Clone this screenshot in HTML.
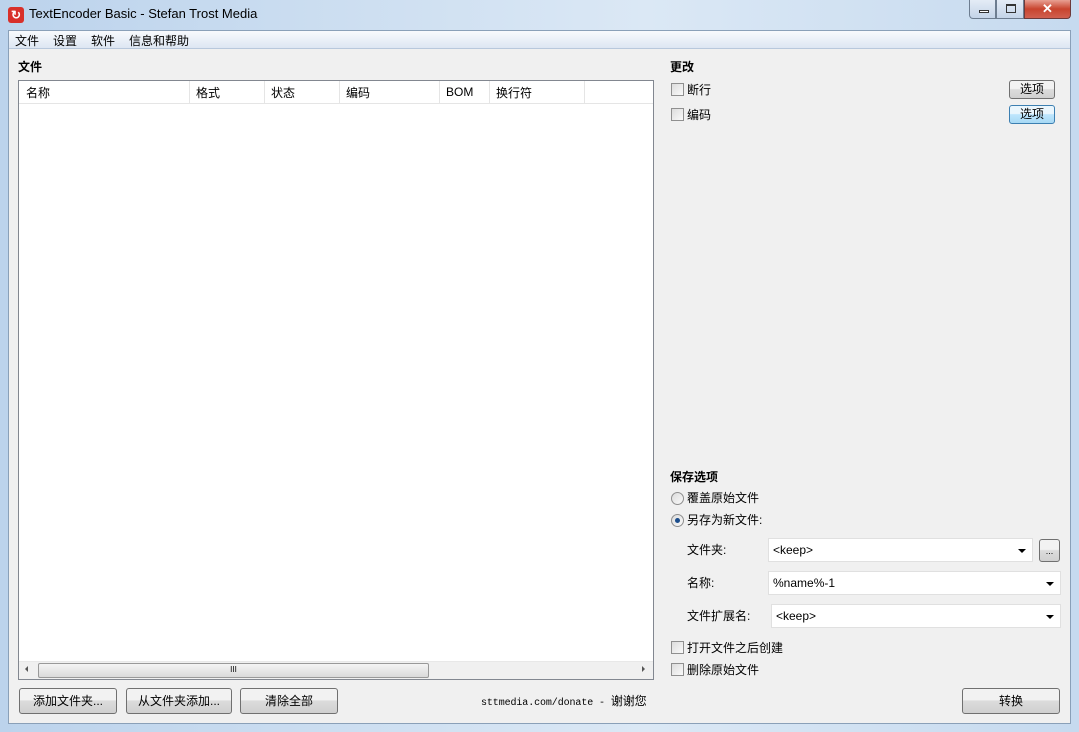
<!DOCTYPE html>
<html><head><meta charset="utf-8"><style>
*{margin:0;padding:0;box-sizing:border-box}
body{width:1079px;height:732px;overflow:hidden;font-family:"Liberation Sans","Noto Sans CJK SC",sans-serif;font-size:12px;color:#000;position:relative;background:linear-gradient(90deg,#bcd3ec,#dbe8f5 60%,#c6daef)}
.a{position:absolute}
.client{left:8px;top:30px;width:1063px;height:694px;background:#f0f0f0;border:1px solid #8aa0b8}
.menu{left:9px;top:31px;width:1061px;height:18px;background:linear-gradient(#f8fafd,#dde6f2);border-bottom:1px solid #b8c8dc}
.btn{position:absolute;border:1px solid #707070;border-radius:3px;background:linear-gradient(#f2f2f2 45%,#dcdcdc 50%,#d0d0d0);text-align:center;font-size:12px}
.cb{position:absolute;width:13px;height:13px;border:1px solid #8f8f8f;background:linear-gradient(135deg,#dcdcdc,#fafafa)}
.rb{position:absolute;width:13px;height:13px;border:1px solid #8f8f8f;border-radius:50%;background:linear-gradient(135deg,#dcdcdc,#fafafa)}
.combo{position:absolute;height:24px;background:#fff;border:1px solid #e0e0e0;padding:4px 4px;font-size:12px}
.combo:after{content:"";position:absolute;right:6px;top:10px;border:4px solid transparent;border-top:4px solid #000;border-bottom:0}
.hd{position:absolute;top:3px;font-size:12px}
.sep{position:absolute;top:0;width:1px;height:22px;background:#e5e5e5}
</style></head><body>
<div class="a" style="left:8px;top:7px;width:16px;height:16px;border-radius:3px;background:#d8302a;color:#fff;font-size:12px;text-align:center;line-height:16px;font-weight:bold">↻</div>
<div class="a" style="left:29px;top:6px;font-size:13px;color:#000">TextEncoder Basic - Stefan Trost Media</div>
<div class="a" style="left:969px;top:0;width:27px;height:19px;border:1px solid #6d7d90;border-top:0;border-radius:0 0 0 4px;background:linear-gradient(#e4ecf6,#c4d4e8)"><div class="a" style="left:9px;top:10px;width:10px;height:3px;border:1px solid #333;background:#fff"></div></div>
<div class="a" style="left:996px;top:0;width:28px;height:19px;border:1px solid #6d7d90;border-top:0;background:linear-gradient(#e4ecf6,#c4d4e8)"><div class="a" style="left:9px;top:4px;width:10px;height:9px;border:1px solid #333;border-top-width:2px"></div></div>
<div class="a" style="left:1024px;top:0;width:47px;height:19px;border:1px solid #6d3a3a;border-top:0;border-radius:0 0 4px 0;background:linear-gradient(#e8a093,#c8442e 50%,#d06050);color:#fff;font-weight:bold;text-align:center;font-size:13px;line-height:17px">✕</div>
<div class="a client"></div>
<div class="a menu"></div>
<div class="a" style="left:15px;top:32px">文件</div>
<div class="a" style="left:53px;top:32px">设置</div>
<div class="a" style="left:91px;top:32px">软件</div>
<div class="a" style="left:129px;top:32px">信息和帮助</div>
<div class="a" style="left:18px;top:58px;font-weight:bold">文件</div>
<div class="a" style="left:18px;top:80px;width:636px;height:600px;background:#fff;border:1px solid #828790">
 <div class="a" style="left:0;top:0;width:634px;height:23px;border-bottom:1px solid #e5e5e5;background:#fff">
  <div class="hd" style="left:7px">名称</div><div class="sep" style="left:170px"></div>
  <div class="hd" style="left:177px">格式</div><div class="sep" style="left:245px"></div>
  <div class="hd" style="left:252px">状态</div><div class="sep" style="left:320px"></div>
  <div class="hd" style="left:327px">编码</div><div class="sep" style="left:420px"></div>
  <div class="hd" style="left:427px;top:4px">BOM</div><div class="sep" style="left:470px"></div>
  <div class="hd" style="left:477px">换行符</div><div class="sep" style="left:565px"></div>
 </div>
 <div class="a" style="left:0;top:580px;width:634px;height:18px;background:#f0f0f0;border-top:1px solid #e8e8e8">
  <div class="a" style="left:6px;top:4px;border:3px solid transparent;border-right:3px solid #555;border-left:0"></div>
  <div class="a" style="left:19px;top:1px;width:391px;height:15px;border:1px solid #999;border-radius:2px;background:linear-gradient(#f4f4f4,#dadada);text-align:center;font-size:8px;line-height:12px">III</div>
  <div class="a" style="left:623px;top:4px;border:3px solid transparent;border-left:3px solid #555;border-right:0"></div>
 </div>
</div>
<div class="btn" style="left:19px;top:688px;width:98px;height:26px;line-height:24px">添加文件夹...</div>
<div class="btn" style="left:126px;top:688px;width:106px;height:26px;line-height:24px">从文件夹添加...</div>
<div class="btn" style="left:240px;top:688px;width:98px;height:26px;line-height:24px">清除全部</div>
<div class="a" style="left:481px;top:692px;font-family:'Liberation Mono','Noto Sans CJK SC',monospace;font-size:10px;letter-spacing:-0.1px">sttmedia.com/donate - <span style="font-family:'Noto Sans CJK SC',sans-serif;font-size:12px">谢谢您</span></div>
<div class="a" style="left:670px;top:58px;font-weight:bold">更改</div>
<div class="cb" style="left:671px;top:83px"></div><div class="a" style="left:687px;top:81px">断行</div>
<div class="cb" style="left:671px;top:108px"></div><div class="a" style="left:687px;top:106px">编码</div>
<div class="btn" style="left:1009px;top:80px;width:46px;height:19px;line-height:17px">选项</div>
<div class="btn" style="left:1009px;top:105px;width:46px;height:19px;line-height:17px;border-color:#3c7fb1;background:linear-gradient(#eaf6fd 45%,#bee6fd 50%,#a7d9f5)">选项</div>
<div class="a" style="left:670px;top:468px;font-weight:bold">保存选项</div>
<div class="rb" style="left:671px;top:492px"></div><div class="a" style="left:687px;top:489px">覆盖原始文件</div>
<div class="rb" style="left:671px;top:514px"><div class="a" style="left:3px;top:3px;width:5px;height:5px;border-radius:50%;background:#1b4d8c"></div></div><div class="a" style="left:687px;top:511px">另存为新文件:</div>
<div class="a" style="left:687px;top:541px">文件夹:</div>
<div class="combo" style="left:768px;top:538px;width:265px">&lt;keep&gt;</div>
<div class="btn" style="left:1039px;top:539px;width:21px;height:23px;line-height:22px;font-size:9px">...</div>
<div class="a" style="left:687px;top:574px">名称:</div>
<div class="combo" style="left:768px;top:571px;width:293px">%name%-1</div>
<div class="a" style="left:687px;top:607px">文件扩展名:</div>
<div class="combo" style="left:771px;top:604px;width:290px">&lt;keep&gt;</div>
<div class="cb" style="left:671px;top:641px"></div><div class="a" style="left:687px;top:639px">打开文件之后创建</div>
<div class="cb" style="left:671px;top:663px"></div><div class="a" style="left:687px;top:661px">删除原始文件</div>
<div class="btn" style="left:962px;top:688px;width:98px;height:26px;line-height:24px">转换</div>
</body></html>
